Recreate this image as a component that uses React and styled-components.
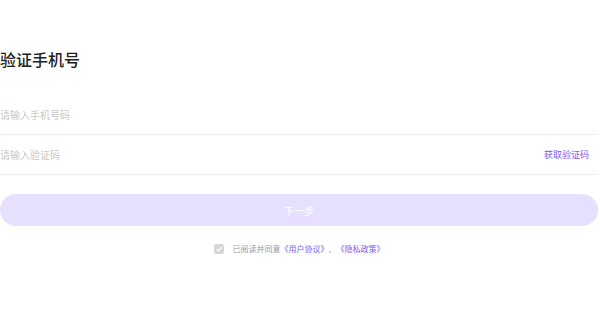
import React from 'react';
import styled, { createGlobalStyle } from 'styled-components';

const GlobalStyle = createGlobalStyle`
  body {
    margin: 0;
    background: #fff;
    font-family: "Noto Sans CJK SC", "Noto Sans", sans-serif;
  }
`;

const Page = styled.div`
  width: 598px;
  padding-top: 46px;
`;

const Title = styled.h1`
  margin: 0;
  font-size: 16px;
  line-height: 26px;
  font-weight: 500;
  color: #222;
`;

const Form = styled.div`
  margin-top: 23px;
`;

const Field = styled.div`
  display: flex;
  align-items: center;
  height: 39px;
  border-bottom: 1px solid #eeeeee;
`;

const Input = styled.input`
  flex: 1;
  border: none;
  outline: none;
  padding: 0;
  font-family: inherit;
  font-size: 10px;
  color: #333;
  background: transparent;
  &::placeholder {
    color: #c8c8c8;
  }
`;

const CodeLink = styled.span`
  font-size: 9px;
  color: #7b5cf0;
  margin-right: 9px;
`;

const NextButton = styled.button`
  display: block;
  width: 100%;
  height: 32px;
  margin-top: 19px;
  border: none;
  border-radius: 16px;
  background: #e6e0fe;
  color: #fff;
  font-family: inherit;
  font-size: 10px;
`;

const Agreement = styled.div`
  display: flex;
  align-items: center;
  justify-content: center;
  margin-top: 17px;
  font-size: 8px;
  color: #999;
`;

const Check = styled.span`
  width: 10px;
  height: 10px;
  border-radius: 2px;
  background: #d6d6d6;
  margin-right: 9px;
  display: flex;
  align-items: center;
  justify-content: center;
`;

const Link = styled.span`
  color: #7b5cf0;
`;

export default function App() {
  return (
    <>
      <GlobalStyle />
      <Page>
        <Title>验证手机号</Title>
        <Form>
          <Field>
            <Input placeholder="请输入手机号码" />
          </Field>
          <Field>
            <Input placeholder="请输入验证码" />
            <CodeLink>获取验证码</CodeLink>
          </Field>
        </Form>
        <NextButton>下一步</NextButton>
        <Agreement>
          <Check>
            <svg width="8" height="8" viewBox="0 0 8 8">
              <path d="M1.5 4.2 L3.3 5.9 L6.6 2.2" fill="none" stroke="#fff" strokeWidth="1.1" />
            </svg>
          </Check>
          已阅读并同意<Link>《用户协议》</Link>、<Link>《隐私政策》</Link>
        </Agreement>
      </Page>
    </>
  );
}
